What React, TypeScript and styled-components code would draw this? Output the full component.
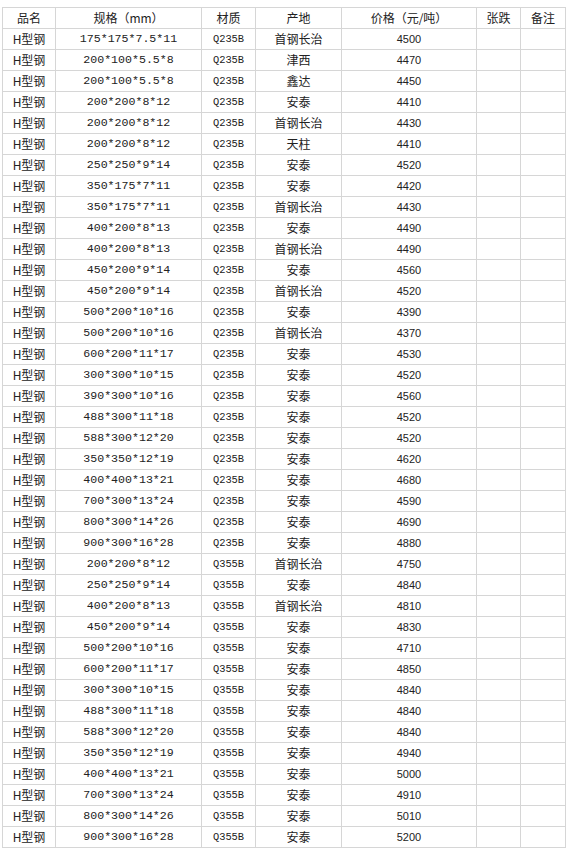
import React from "react";
import styled, { createGlobalStyle } from "styled-components";

const Global = createGlobalStyle`
  html, body { margin: 0; padding: 0; background: #fff; }
  body { font-family: "Noto Sans CJK SC", sans-serif; color: #222; }
`;

const Page = styled.div`
  padding: 4px 0 0 2px;
`;

const Table = styled.div`
  display: inline-flex;
  flex-direction: column;
  gap: 1px;
  padding: 1px;
  background: #d6d6d6;
`;

const Row = styled.div`
  display: grid;
  grid-template-columns: 52px 145px 53px 85px 134px 43px 44px;
  gap: 1px;
`;

const Cell = styled.div<{ $kind?: "cjk" | "spec" | "mat" | "num" }>`
  background: #fff;
  height: 20px;
  display: flex;
  align-items: center;
  justify-content: center;
  white-space: nowrap;
  overflow: hidden;
  font-size: ${(p) =>
    p.$kind === "spec" ? "11.6px" : p.$kind === "mat" ? "10.4px" : p.$kind === "num" ? "11px" : "12px"};
  font-family: ${(p) =>
    p.$kind === "spec" || p.$kind === "mat"
      ? `"Liberation Mono", "Noto Sans CJK SC", monospace`
      : p.$kind === "num"
      ? `"Liberation Sans", "Noto Sans CJK SC", sans-serif`
      : `"Noto Sans CJK SC", sans-serif`};
  line-height: 1;
`;

const HeadCell = styled(Cell)`
  font-size: 12px;
`;

type Item = [string, string, string, string];

const data: Item[] = [
  ["175*175*7.5*11", "Q235B", "首钢长治", "4500"],
  ["200*100*5.5*8", "Q235B", "津西", "4470"],
  ["200*100*5.5*8", "Q235B", "鑫达", "4450"],
  ["200*200*8*12", "Q235B", "安泰", "4410"],
  ["200*200*8*12", "Q235B", "首钢长治", "4430"],
  ["200*200*8*12", "Q235B", "天柱", "4410"],
  ["250*250*9*14", "Q235B", "安泰", "4520"],
  ["350*175*7*11", "Q235B", "安泰", "4420"],
  ["350*175*7*11", "Q235B", "首钢长治", "4430"],
  ["400*200*8*13", "Q235B", "安泰", "4490"],
  ["400*200*8*13", "Q235B", "首钢长治", "4490"],
  ["450*200*9*14", "Q235B", "安泰", "4560"],
  ["450*200*9*14", "Q235B", "首钢长治", "4520"],
  ["500*200*10*16", "Q235B", "安泰", "4390"],
  ["500*200*10*16", "Q235B", "首钢长治", "4370"],
  ["600*200*11*17", "Q235B", "安泰", "4530"],
  ["300*300*10*15", "Q235B", "安泰", "4520"],
  ["390*300*10*16", "Q235B", "安泰", "4560"],
  ["488*300*11*18", "Q235B", "安泰", "4520"],
  ["588*300*12*20", "Q235B", "安泰", "4520"],
  ["350*350*12*19", "Q235B", "安泰", "4620"],
  ["400*400*13*21", "Q235B", "安泰", "4680"],
  ["700*300*13*24", "Q235B", "安泰", "4590"],
  ["800*300*14*26", "Q235B", "安泰", "4690"],
  ["900*300*16*28", "Q235B", "安泰", "4880"],
  ["200*200*8*12", "Q355B", "首钢长治", "4750"],
  ["250*250*9*14", "Q355B", "安泰", "4840"],
  ["400*200*8*13", "Q355B", "首钢长治", "4810"],
  ["450*200*9*14", "Q355B", "安泰", "4830"],
  ["500*200*10*16", "Q355B", "安泰", "4710"],
  ["600*200*11*17", "Q355B", "安泰", "4850"],
  ["300*300*10*15", "Q355B", "安泰", "4840"],
  ["488*300*11*18", "Q355B", "安泰", "4840"],
  ["588*300*12*20", "Q355B", "安泰", "4840"],
  ["350*350*12*19", "Q355B", "安泰", "4940"],
  ["400*400*13*21", "Q355B", "安泰", "5000"],
  ["700*300*13*24", "Q355B", "安泰", "4910"],
  ["800*300*14*26", "Q355B", "安泰", "5010"],
  ["900*300*16*28", "Q355B", "安泰", "5200"],
];

const headers = ["品名", "规格（mm）", "材质", "产地", "价格（元/吨）", "张跌", "备注"];

export default function App() {
  return (
    <Page>
      <Global />
      <Table>
        <Row>
          {headers.map((h) => (
            <HeadCell key={h}>{h}</HeadCell>
          ))}
        </Row>
        {data.map(([spec, mat, origin, price], i) => (
          <Row key={i}>
            <Cell>H型钢</Cell>
            <Cell $kind="spec">{spec}</Cell>
            <Cell $kind="mat">{mat}</Cell>
            <Cell>{origin}</Cell>
            <Cell $kind="num">{price}</Cell>
            <Cell />
            <Cell />
          </Row>
        ))}
      </Table>
    </Page>
  );
}
